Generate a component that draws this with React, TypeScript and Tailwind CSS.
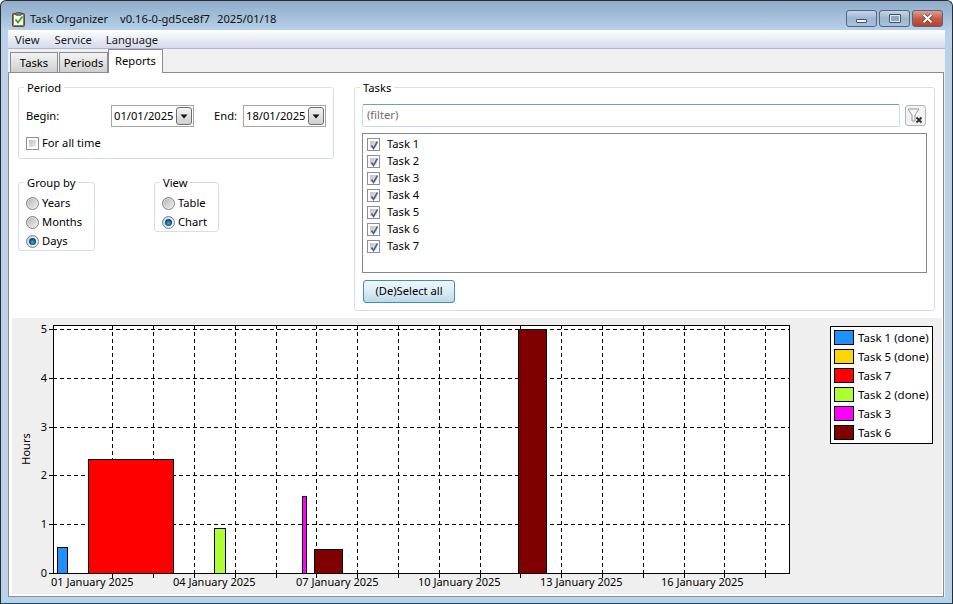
import React from "react";

const FONT = '"Noto Sans", "Liberation Sans", sans-serif';

function Group({ title, className, children }: { title: string; className: string; children?: React.ReactNode }) {
  return (
    <div className={`relative rounded-[3px] border border-[#d5dfe5] ${className}`}>
      <span className="absolute left-[5px] top-[-8px] bg-white px-[3px] text-[11.2px] leading-[16px]">{title}</span>
      {children}
    </div>
  );
}

function Check({ checked }: { checked?: boolean }) {
  return (
    <span className="relative block h-[13px] w-[13px] shrink-0 border border-[#8e8f8f] bg-white p-[2px]">
      <span className="block h-full w-full bg-linear-to-br from-[#bfc0c4] to-[#eeeeef]" />
      {checked && (
        <svg className="absolute left-[1px] top-[1px]" width="11" height="11" viewBox="0 0 11 11">
          <path d="M2.5 5.5 L4.5 8.5 L8.5 1.5" fill="none" stroke="#4a5f97" strokeWidth="1.6" />
        </svg>
      )}
    </span>
  );
}

function Radio({ on }: { on?: boolean }) {
  return (
    <span className="flex h-[13px] w-[13px] shrink-0 items-center justify-center rounded-full border border-[#7f7f7f] bg-linear-to-br from-[#cfcfcf] to-[#f6f6f6]">
      {on ? (
        <span className="h-[7px] w-[7px] rounded-full bg-[radial-gradient(circle_at_50%_60%,#35b8ec,#084f80_55%)]" />
      ) : (
        <span className="h-[9px] w-[9px] rounded-full bg-linear-to-br from-[#b8b8b8] to-[#ececec]" />
      )}
    </span>
  );
}

function RadioRow({ label, on }: { label: string; on?: boolean }) {
  return (
    <div className="flex h-[19px] items-center gap-[3px] text-[11.2px]">
      <Radio on={on} />
      <span className="mt-[-1px]">{label}</span>
    </div>
  );
}

function DateBox({ value }: { value: string }) {
  return (
    <div className="flex h-[22px] w-[83px] items-center justify-between border border-[#a5a5a5] bg-white pl-[2px] pr-[1px] text-[11.2px]">
      <span>{value}</span>
      <span className="flex h-[18px] w-[16px] items-center justify-center rounded-[3px] border border-[#707070] bg-linear-to-b from-[#f2f2f2] to-[#cfcfcf]">
        <svg width="8" height="5" viewBox="0 0 8 5"><path d="M0.5 0.5 H7.5 L4 4.5 Z" fill="#111" /></svg>
      </span>
    </div>
  );
}

function Tab({ label, active, w }: { label: string; active?: boolean; w: string }) {
  return active ? (
    <div className={`relative z-10 mb-[-1px] flex h-[24px] items-start justify-center border border-b-0 border-[#898c95] bg-white pt-[3px] text-[11.2px] leading-[16px] ${w}`}>
      {label}
    </div>
  ) : (
    <div className={`flex h-[20px] items-center justify-center border border-b-0 border-[#898c95] bg-linear-to-b from-[#f4f4f4] to-[#cfcfcf] pt-[2px] text-[11.2px] ${w}`}>
      {label}
    </div>
  );
}

function WinButton({ kind }: { kind: "min" | "max" | "close" }) {
  const close = kind === "close";
  return (
    <div
      className={`relative flex h-[17px] w-[31px] items-center justify-center overflow-hidden rounded-[3px] border border-[#54657d] ${
        close ? "bg-linear-to-b from-[#dd9f92] via-[#c75b47] to-[#b8402c]" : "bg-linear-to-b from-[#c5d5e8] via-[#9eb6d2] to-[#a7c0db]"
      }`}
    >
      {kind === "min" && <span className="mt-[5px] h-[4px] w-[11px] rounded-[1px] border border-[#45525f] bg-white" />}
      {kind === "max" && (
        <span className="h-[9px] w-[12px] rounded-[1px] border border-[#45525f] bg-[#dfe8f2] p-[1px]">
          <span className="block h-full w-full bg-[#8ea6c0]" />
        </span>
      )}
      {close && (
        <svg width="11" height="9" viewBox="0 0 11 9">
          <path d="M1.5 0.8 L9.5 8.2 M9.5 0.8 L1.5 8.2" stroke="#3d3d3d" strokeWidth="3.4" />
          <path d="M1.5 0.8 L9.5 8.2 M9.5 0.8 L1.5 8.2" stroke="#ffffff" strokeWidth="2.2" />
        </svg>
      )}
    </div>
  );
}

const TOP = 325;
const BOTTOM = 573;
const LEFT = 53;
const RIGHT = 789;
const OX = 12;
const OY = 318;
const yv = [329, 378, 427, 475, 524];
const xv = [112, 153, 194, 235, 276, 316, 357, 398, 439, 480, 520, 561, 602, 643, 684, 724, 765];
const bars = [
  { x: 57, w: 11, top: 547, c: "#1e90ff" },
  { x: 88, w: 86, top: 459, c: "#ff0000" },
  { x: 214, w: 12, top: 528, c: "#adff2f" },
  { x: 302, w: 5, top: 496, c: "#ff00ff" },
  { x: 314, w: 29, top: 549, c: "#800000" },
  { x: 518, w: 29, top: 329, c: "#800000" },
];
const xlabels: [number, string][] = [
  [51, "01 January 2025"],
  [173, "04 January 2025"],
  [296, "07 January 2025"],
  [418, "10 January 2025"],
  [540, "13 January 2025"],
  [661, "16 January 2025"],
];

function Chart() {
  const p = (v: number) => v + 0.5;
  return (
    <svg width="790" height="275" viewBox={`${OX} ${OY} 790 275`} className="shrink-0" shapeRendering="crispEdges">
      <rect x={LEFT} y={TOP} width={RIGHT - LEFT} height={BOTTOM - TOP} fill="#fff" />
      {yv.map((y) => (
        <line key={y} x1={LEFT} x2={RIGHT} y1={p(y)} y2={p(y)} stroke="#000" strokeDasharray="4 3" />
      ))}
      {xv.map((x) => (
        <line key={x} x1={p(x)} x2={p(x)} y1={TOP} y2={BOTTOM} stroke="#000" strokeDasharray="4 3" />
      ))}
      {bars.map((b, i) => (
        <rect key={i} x={p(b.x)} y={p(b.top)} width={b.w - 1} height={BOTTOM - b.top} fill={b.c} stroke="#000" />
      ))}
      <rect x={p(LEFT)} y={p(TOP)} width={RIGHT - LEFT} height={BOTTOM - TOP} fill="none" stroke="#000" />
      {[...yv, BOTTOM].map((y) => (
        <line key={y} x1={49} x2={LEFT} y1={p(y)} y2={p(y)} stroke="#000" />
      ))}
      {xv.map((x) => (
        <line key={x} x1={p(x)} x2={p(x)} y1={BOTTOM} y2={BOTTOM + 5} stroke="#000" />
      ))}
      <g fontFamily={FONT} fontSize="11" fill="#000" shapeRendering="auto">
        {["5", "4", "3", "2", "1", "0"].map((t, i) => (
          <text key={t} x={47} y={[...yv, BOTTOM][i] + 4} textAnchor="end">{t}</text>
        ))}
        {xlabels.map(([x, t]) => (
          <text key={t} x={x} y={586}>{t}</text>
        ))}
        <text transform="translate(30 449) rotate(-90)" textAnchor="middle">Hours</text>
      </g>
    </svg>
  );
}

const legend = [
  ["#1e90ff", "Task 1 (done)"],
  ["#ffd700", "Task 5 (done)"],
  ["#ff0000", "Task 7"],
  ["#adff2f", "Task 2 (done)"],
  ["#ff00ff", "Task 3"],
  ["#800000", "Task 6"],
];

const tasks = ["Task 1", "Task 2", "Task 3", "Task 4", "Task 5", "Task 6", "Task 7"];

export default function App() {
  return (
    <div
      className="flex h-[604px] w-[953px] flex-col overflow-hidden rounded-t-[6px] border border-[#2c2c2c] border-b-[#0f4f5f] bg-linear-to-b from-[#8eacca] via-[#b9d1ea] via-[5%] to-[#b9d1ea] pb-[6px] pl-[7px] pr-[7px] text-black"
      style={{ fontFamily: FONT }}
    >
      <div className="flex h-[29px] shrink-0 items-start">
        <svg className="ml-[4px] mt-[11px] shrink-0" width="13" height="15" viewBox="0 0 13 15">
          <rect x="0.5" y="1.5" width="12" height="13" rx="1" fill="#8f7a55" stroke="#5d4a30" />
          <rect x="2" y="3" width="9" height="10" fill="#fbfbf5" />
          <rect x="4" y="0.5" width="5" height="3" fill="#777" stroke="#444" strokeWidth="0.5" />
          <path d="M3.5 7.5 L6 10.5 L10.5 4.5" fill="none" stroke="#2fa52a" strokeWidth="1.8" />
        </svg>
        <div className="ml-[5px] mt-[10px] flex text-[11.2px] leading-[16px] text-[#111]">
          <span className="w-[90px]">Task Organizer</span>
          <span className="w-[97px]">v0.16-0-gd5ce8f7</span>
          <span>2025/01/18</span>
        </div>
        <div className="ml-auto mr-[2px] mt-[9px] flex gap-[2px]">
          <WinButton kind="min" />
          <WinButton kind="max" />
          <WinButton kind="close" />
        </div>
      </div>

      <div className="flex min-h-0 flex-1 flex-col bg-[#f0f0f0]">
        <div className="flex h-[19px] shrink-0 items-center gap-[14px] border-b border-[#b0b6cc] bg-linear-to-b from-[#ffffff] to-[#d5daec] pl-[7px] pt-[2px] text-[11.2px] text-[#1a1a1a]">
          <span>View</span>
          <span className="ml-[1px]">Service</span>
          <span>Language</span>
        </div>

        <div className="flex h-[23px] shrink-0 items-end pl-[2px]">
          <Tab label="Tasks" w="w-[48px]" />
          <Tab label="Periods" w="ml-[1px] w-[49px]" />
          <Tab label="Reports" active w="w-[55px]" />
        </div>

        <div className="mr-[1px] flex min-h-0 flex-1 flex-col border border-[#898c95] bg-white">
          <div className="flex h-[245px] shrink-0 items-start gap-[20px] pl-[9px] pt-[14px]">
            <div className="w-[316px] shrink-0">
              <Group title="Period" className="h-[72px] w-[316px]">
                <div className="mt-[17px] flex items-center pl-[7px] text-[11.2px]">
                  <span className="w-[85px]">Begin:</span>
                  <DateBox value="01/01/2025" />
                  <span className="ml-[20px] w-[29px]">End:</span>
                  <DateBox value="18/01/2025" />
                </div>
                <div className="mt-[10px] flex h-[13px] items-center gap-[3px] pl-[7px] text-[11.2px]">
                  <Check />
                  <span>For all time</span>
                </div>
              </Group>
              <div className="mt-[23px] flex items-start gap-[59px]">
                <Group title="Group by" className="h-[69px] w-[77px] pl-[7px] pt-[11px]">
                  <RadioRow label="Years" />
                  <RadioRow label="Months" />
                  <RadioRow label="Days" on />
                </Group>
                <Group title="View" className="h-[50px] w-[65px] pl-[7px] pt-[11px]">
                  <RadioRow label="Table" />
                  <RadioRow label="Chart" on />
                </Group>
              </div>
            </div>

            <Group title="Tasks" className="h-[224px] w-[581px] px-[7px] pt-[16px]">
              <div className="flex items-center">
                <div className="flex h-[23px] w-[538px] items-center rounded-[2px] border border-[#c5dcec] border-t-[#6b9fc4] pl-[4px] text-[11.2px] text-[#6d6d6d]">
                  (filter)
                </div>
                <div className="ml-[5px] flex h-[21px] w-[21px] items-center justify-center rounded-[3px] border border-[#b5b5b5] bg-[#f3f3f3]">
                  <svg width="17" height="16" viewBox="0 0 17 16">
                    <path d="M1 1 H12 L8 7 V13 H5 V7 Z" fill="#f5f5f5" stroke="#9a9a9a" />
                    <path d="M9.5 9.5 L14.5 14.5 M14.5 9.5 L9.5 14.5" stroke="#333" strokeWidth="2" />
                  </svg>
                </div>
              </div>
              <div className="mt-[6px] h-[140px] w-[565px] border border-[#82878c] pl-[4px] pt-[2px]">
                {tasks.map((t) => (
                  <div key={t} className="flex h-[17px] items-center gap-[7px] text-[11.2px]">
                    <Check checked />
                    <span className="mt-[-1px]">{t}</span>
                  </div>
                ))}
              </div>
              <div className="ml-[1px] mt-[7px] flex h-[23px] w-[92px] items-center justify-center rounded-[3px] border border-[#3c8fb8] bg-linear-to-b from-[#eef7fc] via-[#dcecf6] to-[#bcd8e8] text-[11.2px]">
                (De)Select all
              </div>
            </Group>
          </div>

          <div className="mb-[2px] ml-[3px] mr-[1px] flex min-h-0 flex-1 items-start bg-[#efefef]">
            <Chart />
            <div className="ml-[28px] mt-[8px] h-[118px] w-[103px] border border-black bg-white pl-[3px] pt-[3px]">
              {legend.map(([c, t]) => (
                <div key={t} className="flex h-[19px] items-start gap-[4px] text-[11.5px] leading-[16px]">
                  <span className="h-[15px] w-[20px] shrink-0 border border-black" style={{ backgroundColor: c }} />
                  <span className="whitespace-nowrap">{t}</span>
                </div>
              ))}
            </div>
          </div>
        </div>
      </div>
    </div>
  );
}
